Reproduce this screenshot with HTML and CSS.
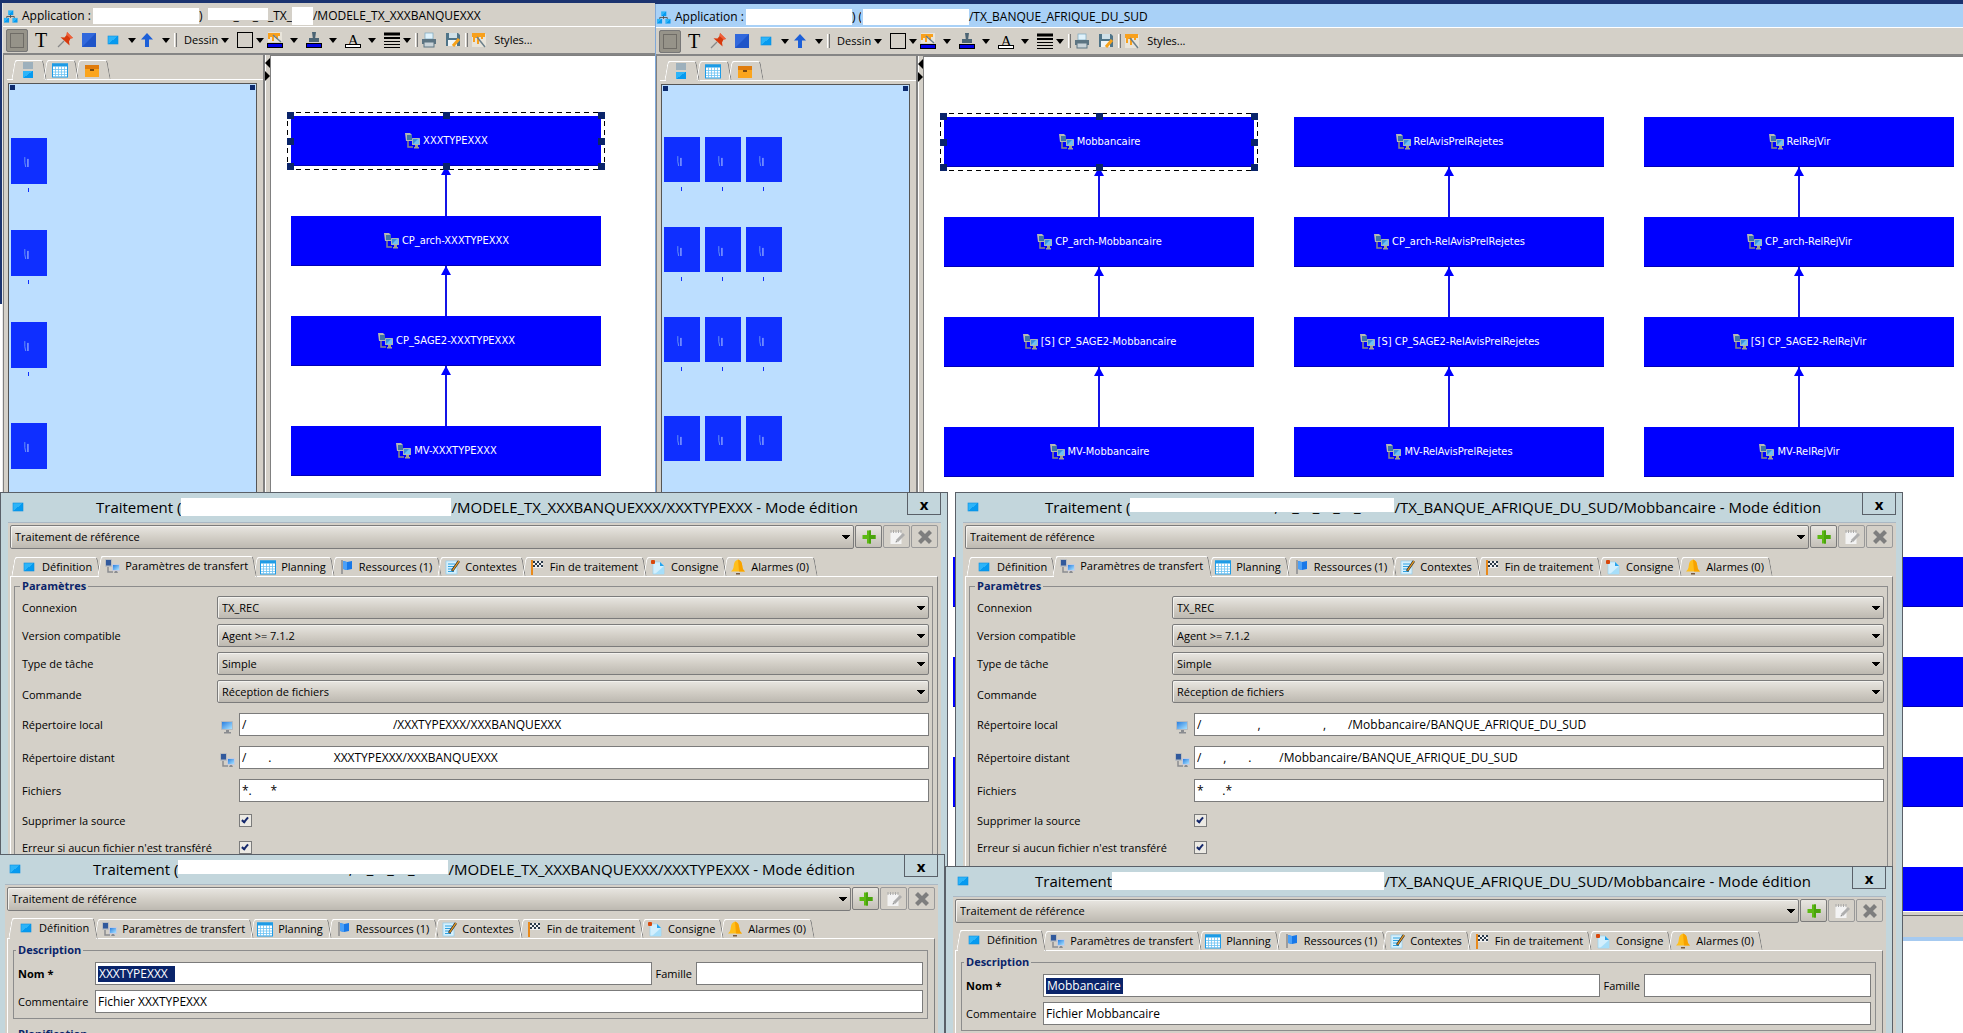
FILE: index.html
```html
<!DOCTYPE html>
<html lang="fr">
<head>
	<meta charset="utf-8">
	<title>Traitement - Mode édition</title>
	<link rel="stylesheet" href="styles.css">
</head>
<body>
	<!-- icons -->
	<svg class="sprite">
		<defs>
			<linearGradient id="g-sq" x1="0" y1="0" x2="1" y2="1">
				<stop offset="0.5" stop-color="#2db4f8"/><stop offset="0.5" stop-color="#069af0"/>
			</linearGradient>
			<linearGradient id="g-scr" x1="0" y1="0" x2="1" y2="1">
				<stop offset="0" stop-color="#2a7fe0"/><stop offset="1" stop-color="#a9e2ff"/>
			</linearGradient>
		</defs>
		<symbol id="i-square" viewBox="0 0 16 16"><rect x="3" y="4" width="10" height="8" fill="url(#g-sq)" stroke="#0a8fe0" stroke-width=".6"/></symbol>
		<symbol id="i-app" viewBox="0 0 16 16">
			<path d="M8 6v4M4 11V8.500h8V11" fill="none" stroke="#555" stroke-width="1"/>
			<rect x="5.500" y="2" width="5.500" height="5" fill="url(#g-sq)"/><rect x="1" y="10" width="5.500" height="5" fill="url(#g-sq)"/><rect x="10" y="10" width="5.500" height="5" fill="url(#g-sq)"/>
		</symbol>
		<symbol id="i-net" viewBox="0 0 16 16">
			<rect x="1" y="1" width="7" height="8" rx="1" fill="#b9bcc0"/><rect x="2" y="2" width="5" height="5.500" fill="#31599c"/>
			<path d="M4 9v5h5" fill="none" stroke="#8a8c90" stroke-width="1.500"/>
			<rect x="8" y="6" width="8" height="7" rx=".6" fill="#c5cade"/><rect x="9" y="7" width="6" height="5" fill="url(#g-scr)"/>
			<path d="M11 13h2l1 2h-4z" fill="#8a8c90"/>
		</symbol>
		<symbol id="i-host" viewBox="0 0 16 16">
			<path d="M1 0h5l2 2v6H2z" fill="#b4b9b2"/><rect x="3" y="2" width="5" height="5" fill="#3f74a8"/>
			<path d="M4 8v6h5" fill="none" stroke="#8c8c84" stroke-width="1.500"/>
			<rect x="8" y="5" width="8" height="7" rx=".6" fill="#a9b8b8"/><rect x="9" y="6" width="6" height="5" fill="#6fc0f4"/><path d="M9 11V6h5z" fill="#3b8fdc"/>
			<path d="M11 12h3v2h1v1.500h-5V14h1z" fill="#a3a28e"/>
		</symbol>
		<symbol id="i-pc" viewBox="0 0 16 16">
			<rect x="2" y="2" width="12" height="9" rx=".8" fill="#b6babf"/><rect x="3" y="3" width="10" height="7" fill="url(#g-scr)"/>
			<path d="M7 11h3v2h2v1.500H5V13h2z" fill="#8a8c90"/>
		</symbol>
		<symbol id="i-cal" viewBox="0 0 16 16">
			<rect x=".5" y="2" width="15" height="13" fill="#fff" stroke="#1d9be6"/><rect x="0" y="1.500" width="16" height="3" fill="#1d9be6"/>
			<path d="M3.500 4v11M6.500 4v11M9.500 4v11M12.500 4v11M1 7.500h14M1 10h14M1 12.500h14" stroke="#6cc3f2" stroke-width=".8"/>
		</symbol>
		<symbol id="i-flag" viewBox="0 0 16 16">
			<rect x="3" y="1" width="2" height="14" fill="#9c9c9c"/><path d="M5 2l4 1 5-1v8l-5 1-4-1z" fill="#1878e8"/><path d="M5 2l4 1v8l-4-1z" fill="#4aa0f8"/>
		</symbol>
		<symbol id="i-note" viewBox="0 0 16 16">
			<rect x="2" y="2" width="11" height="13" fill="#d7f0fc" stroke="#8fcdee" stroke-width=".7"/><path d="M4 5h7M4 7.500h6M4 10h5M4 12.500h6" stroke="#2da2e2"/>
			<path d="M15 2L8 12" stroke="#333" stroke-width="2.600"/><path d="M15 2L8.500 11.500" stroke="#f6a21c" stroke-width="1.200"/>
		</symbol>
		<symbol id="i-end" viewBox="0 0 16 16">
			<rect x="2" y="1" width="2" height="15" fill="#e88a1c"/><rect x="4" y="2" width="10" height="7" fill="#eee"/>
			<path d="M4 2h2v2H4zM8 2h2v2H8zM12 2h2v2h-2zM6 4h2v2H6zM10 4h2v2h-2zM4 6h2v2H4zM8 6h2v2H8zM12 6h2v2h-2z" fill="#2a3a4a"/>
		</symbol>
		<symbol id="i-page" viewBox="0 0 16 16">
			<path d="M3 3h7l4 4v8H3z" fill="#d2effd" stroke="#8fd2f4" stroke-width=".6"/><path d="M14 7v8H5z" fill="#a6def9"/><path d="M10 3l4 4h-4z" fill="#26a3ec"/><rect x="1" y="1" width="4" height="4" rx="1" fill="#d8480c"/>
		</symbol>
		<symbol id="i-bell" viewBox="0 0 16 16">
			<path d="M8 0.500c3 1 4 3 4.300 6.500.2 2.500 1 4 2.700 5.500H1C2.700 11 3.500 9.500 3.700 7 4 3.500 5 1.500 8 .5z" fill="#ffbf1c"/><path d="M8 .5c3 1 4 3 4.300 6.500.2 2.500 1 4 2.700 5.500H9z" fill="#f7a200"/><path d="M6 14h4v1.500H6z" fill="#7a5a3a"/>
		</symbol>
		<symbol id="i-plus" viewBox="0 0 16 16"><path d="M6 1.500h4V6h4.500v4H10v4.500H6V10H1.500V6H6z" fill="#5db914"/><path d="M10 1.500V6h4.500v4H10v4.500H8L8 1.500z" fill="#4aa40c"/></symbol>
		<symbol id="i-edit" viewBox="0 0 16 16">
			<rect x="1.500" y="3" width="11" height="12" fill="#f3f3f3"/><path d="M2 1v3M4.500 1v3M7 1v3M9.500 1v3M12 1v3" stroke="#aaa"/><path d="M15 5l-7 7" stroke="#aeaeae" stroke-width="3"/><path d="M6.500 13.500l.6-2 1.400 1.400z" fill="#888"/>
		</symbol>
		<symbol id="i-del" viewBox="0 0 16 16"><path d="M2.500 2.500l11 11M13.500 2.500l-11 11" stroke="#7e7e7e" stroke-width="4.200"/></symbol>
		<symbol id="i-box" viewBox="0 0 16 16">
			<rect x="1" y="3" width="14" height="12" fill="#fba51c"/><rect x="1" y="3" width="14" height="4" fill="#e07c0c"/><rect x="6" y="7" width="4" height="2" fill="#7a4a10"/>
		</symbol>
		<symbol id="i-two" viewBox="0 0 16 16"><rect x="3" y="0" width="10" height="7" fill="#9db0bc"/><rect x="3" y="9" width="10" height="7" fill="url(#g-sq)"/></symbol>
		<symbol id="i-pin" viewBox="0 0 16 16"><path d="M7 9L1 15" stroke="#888" stroke-width="1.300"/><path d="M10 0l6 6-2.500.6-1.500 2.800.6 4L3.500 5.200l4 .3L9.600 3z" fill="#d8390c"/><path d="M10 0l6 6-2.500.6L9.600 3z" fill="#f0603a"/></symbol>
		<symbol id="i-rect" viewBox="0 0 16 16"><rect x="1" y="1" width="14" height="14" fill="#1f54c8"/><path d="M1 1h14L1 15z" fill="#3168dc"/></symbol>
		<symbol id="i-up" viewBox="0 0 16 16"><path d="M8 1l6 6.500h-4V15H6V7.500H2z" fill="#1c5fd8"/></symbol>
		<symbol id="i-frame" viewBox="0 0 16 16"><rect x=".5" y=".5" width="15" height="15" fill="none" stroke="#000"/></symbol>
		<symbol id="i-paint" viewBox="0 0 16 16">
			<rect x="1" y="0" width="14" height="10" fill="#e8e4da"/><path d="M1 1h12v3h-2v3H9V4H7v5H5V5H3v2H1z" fill="#f8a01c"/><path d="M6 3l8 7" stroke="#6b7f8a" stroke-width="1.500"/><rect x=".5" y="11.500" width="15" height="4" fill="#0000e8" stroke="#000"/>
		</symbol>
		<symbol id="i-stamp" viewBox="0 0 16 16">
			<path d="M6 0h4l-.8 6H13v4H3V6h3.800z" fill="#4b6474"/><rect x=".5" y="11.500" width="15" height="4" fill="#0000e8" stroke="#000"/>
		</symbol>
		<symbol id="i-lines" viewBox="0 0 16 16"><path d="M0 2h16" stroke="#000" stroke-width="3"/><path d="M0 6h16" stroke="#000" stroke-width="2"/><path d="M0 9.500h16M0 12.500h16M0 15.500h16" stroke="#000"/></symbol>
		<symbol id="i-print" viewBox="0 0 16 16">
			<rect x="4" y="1" width="8" height="6" fill="#dff2fb" stroke="#7aa6bd" stroke-width=".7"/><rect x="1" y="7" width="14" height="5" fill="#5c7482"/><rect x="3" y="10" width="10" height="5" fill="#c9d3d8" stroke="#5c7482"/>
		</symbol>
		<symbol id="i-save" viewBox="0 0 16 16">
			<path d="M1 1h12l2 2v11H1z" fill="#4f7488"/><rect x="4" y="1" width="8" height="5" fill="#cfe0e8"/><rect x="3" y="8" width="9" height="6" fill="#eef4f7"/><path d="M14 7l-6 7" stroke="#f6a21c" stroke-width="3"/>
		</symbol>
		<symbol id="i-style" viewBox="0 0 16 16">
			<rect x="1" y="2" width="14" height="13" fill="#e8e4da"/><path d="M1 1h13v4h-2v2h-2V5H8v7H6V6H4v4H2V5H1z" fill="#f8a01c"/><path d="M6 5l8 10" stroke="#6b7f8a" stroke-width="1.500"/>
		</symbol>
		<symbol id="i-mark" viewBox="0 0 10 14"><path d="M2 1v6l1 5" fill="none" stroke="#6f9cf0"/><path d="M5.500 3v9" stroke="#cfe2ff"/></symbol>
	</svg>

	<div class="desktop">
		<!-- model application -->
		<section class="app app-model">
			<header class="app-title">
				<svg class="icon"><use href="#i-app"/></svg>
				<span>Application :</span>
				<span class="mask mask-wide"></span>
				<span class="paren">)</span>
				<span class="mask mask-mid mask-thin"><i>_</i><i>_</i></span>
				<span>_TX_</span>
				<span class="mask mask-short"></span>
				<span>/MODELE_TX_XXXBANQUEXXX</span>
			</header>
			<nav class="toolbar">
				<button class="tool-select" aria-label="Sélection"></button>
				<button class="tool serif">T</button>
				<button class="tool" aria-label="Épingle"><svg><use href="#i-pin"/></svg></button>
				<button class="tool" aria-label="Rectangle"><svg><use href="#i-rect"/></svg></button>
				<button class="tool" aria-label="Traitement"><svg><use href="#i-square"/></svg></button>
				<span class="caret"></span>
				<button class="tool tight" aria-label="Lien"><svg><use href="#i-up"/></svg></button>
				<span class="caret"></span>
				<span class="sep"></span>
				<button class="tool-text">Dessin</button>
				<span class="caret tight"></span>
				<button class="tool" aria-label="Forme"><svg><use href="#i-frame"/></svg></button>
				<span class="caret tight"></span>
				<button class="tool tight" aria-label="Remplissage"><svg><use href="#i-paint"/></svg></button>
				<span class="caret"></span>
				<button class="tool" aria-label="Contour"><svg><use href="#i-stamp"/></svg></button>
				<span class="caret"></span>
				<button class="tool serif bar">A</button>
				<span class="caret"></span>
				<button class="tool" aria-label="Trait"><svg><use href="#i-lines"/></svg></button>
				<span class="caret tight"></span>
				<span class="sep"></span>
				<button class="tool tight" aria-label="Imprimer"><svg><use href="#i-print"/></svg></button>
				<button class="tool" aria-label="Enregistrer"><svg><use href="#i-save"/></svg></button>
				<span class="sep"></span>
				<button class="tool tight" aria-label="Pinceau"><svg><use href="#i-style"/></svg></button>
				<button class="tool-text">Styles...</button>
			</nav>
			<div class="app-main">
				<aside class="sidebar">
					<div class="side-tabs">
						<button class="side-tab on" aria-label="Aperçu"><svg class="icon"><use href="#i-two"/></svg></button>
						<button class="side-tab" aria-label="Planning"><svg class="icon"><use href="#i-cal"/></svg></button>
						<button class="side-tab" aria-label="Ressources"><svg class="icon"><use href="#i-box"/></svg></button>
					</div>
					<div class="map">
						<div class="tiles">
							<i class="tile"><svg><use href="#i-mark"/></svg></i>
							<i class="tile"><svg><use href="#i-mark"/></svg></i>
							<i class="tile"><svg><use href="#i-mark"/></svg></i>
							<i class="tile last"><svg><use href="#i-mark"/></svg></i>
						</div>
					</div>
				</aside>
				<div class="splitter"><i class="to-left"></i><i class="to-right"></i></div>
				<div class="canvas">
					<div class="chains">
						<div class="chain">
							<div class="node selected"><svg class="icon"><use href="#i-host"/></svg>XXXTYPEXXX<b class="handles"></b></div>
							<i class="arrow"></i>
							<div class="node"><svg class="icon"><use href="#i-host"/></svg>CP_arch-XXXTYPEXXX</div>
							<i class="arrow"></i>
							<div class="node"><svg class="icon"><use href="#i-host"/></svg>CP_SAGE2-XXXTYPEXXX</div>
							<i class="arrow long"></i>
							<div class="node"><svg class="icon"><use href="#i-host"/></svg>MV-XXXTYPEXXX</div>
						</div>
					</div>
				</div>
			</div>
		</section>

		<!-- real application -->
		<section class="app app-bank">
			<header class="app-title">
				<svg class="icon"><use href="#i-app"/></svg>
				<span>Application :</span>
				<span class="mask mask-wide"></span>
				<span class="paren">) (</span>
				<span class="mask mask-wide"></span>
				<span>/TX_BANQUE_AFRIQUE_DU_SUD</span>
			</header>
			<nav class="toolbar">
				<button class="tool-select" aria-label="Sélection"></button>
				<button class="tool serif">T</button>
				<button class="tool" aria-label="Épingle"><svg><use href="#i-pin"/></svg></button>
				<button class="tool" aria-label="Rectangle"><svg><use href="#i-rect"/></svg></button>
				<button class="tool" aria-label="Traitement"><svg><use href="#i-square"/></svg></button>
				<span class="caret"></span>
				<button class="tool tight" aria-label="Lien"><svg><use href="#i-up"/></svg></button>
				<span class="caret"></span>
				<span class="sep"></span>
				<button class="tool-text">Dessin</button>
				<span class="caret tight"></span>
				<button class="tool" aria-label="Forme"><svg><use href="#i-frame"/></svg></button>
				<span class="caret tight"></span>
				<button class="tool tight" aria-label="Remplissage"><svg><use href="#i-paint"/></svg></button>
				<span class="caret"></span>
				<button class="tool" aria-label="Contour"><svg><use href="#i-stamp"/></svg></button>
				<span class="caret"></span>
				<button class="tool serif bar">A</button>
				<span class="caret"></span>
				<button class="tool" aria-label="Trait"><svg><use href="#i-lines"/></svg></button>
				<span class="caret tight"></span>
				<span class="sep"></span>
				<button class="tool tight" aria-label="Imprimer"><svg><use href="#i-print"/></svg></button>
				<button class="tool" aria-label="Enregistrer"><svg><use href="#i-save"/></svg></button>
				<span class="sep"></span>
				<button class="tool tight" aria-label="Pinceau"><svg><use href="#i-style"/></svg></button>
				<button class="tool-text">Styles...</button>
			</nav>
			<div class="app-main">
				<aside class="sidebar">
					<div class="side-tabs">
						<button class="side-tab on" aria-label="Aperçu"><svg class="icon"><use href="#i-two"/></svg></button>
						<button class="side-tab" aria-label="Planning"><svg class="icon"><use href="#i-cal"/></svg></button>
						<button class="side-tab" aria-label="Ressources"><svg class="icon"><use href="#i-box"/></svg></button>
					</div>
					<div class="map">
						<div class="tiles">
							<i class="tile"><svg><use href="#i-mark"/></svg></i>
							<i class="tile"><svg><use href="#i-mark"/></svg></i>
							<i class="tile"><svg><use href="#i-mark"/></svg></i>
							<i class="tile last"><svg><use href="#i-mark"/></svg></i>
						</div>
						<div class="tiles">
							<i class="tile"><svg><use href="#i-mark"/></svg></i>
							<i class="tile"><svg><use href="#i-mark"/></svg></i>
							<i class="tile"><svg><use href="#i-mark"/></svg></i>
							<i class="tile last"><svg><use href="#i-mark"/></svg></i>
						</div>
						<div class="tiles">
							<i class="tile"><svg><use href="#i-mark"/></svg></i>
							<i class="tile"><svg><use href="#i-mark"/></svg></i>
							<i class="tile"><svg><use href="#i-mark"/></svg></i>
							<i class="tile last"><svg><use href="#i-mark"/></svg></i>
						</div>
					</div>
				</aside>
				<div class="splitter"><i class="to-left"></i><i class="to-right"></i></div>
				<div class="canvas">
					<div class="chains">
						<div class="chain">
							<div class="node selected"><svg class="icon"><use href="#i-host"/></svg>Mobbancaire<b class="handles"></b></div>
							<i class="arrow"></i>
							<div class="node"><svg class="icon"><use href="#i-host"/></svg>CP_arch-Mobbancaire</div>
							<i class="arrow"></i>
							<div class="node"><svg class="icon"><use href="#i-host"/></svg>[S] CP_SAGE2-Mobbancaire</div>
							<i class="arrow long"></i>
							<div class="node"><svg class="icon"><use href="#i-host"/></svg>MV-Mobbancaire</div>
						</div>
						<div class="chain">
							<div class="node"><svg class="icon"><use href="#i-host"/></svg>RelAvisPrelRejetes</div>
							<i class="arrow"></i>
							<div class="node"><svg class="icon"><use href="#i-host"/></svg>CP_arch-RelAvisPrelRejetes</div>
							<i class="arrow"></i>
							<div class="node"><svg class="icon"><use href="#i-host"/></svg>[S] CP_SAGE2-RelAvisPrelRejetes</div>
							<i class="arrow long"></i>
							<div class="node"><svg class="icon"><use href="#i-host"/></svg>MV-RelAvisPrelRejetes</div>
						</div>
						<div class="chain">
							<div class="node"><svg class="icon"><use href="#i-host"/></svg>RelRejVir</div>
							<i class="arrow"></i>
							<div class="node"><svg class="icon"><use href="#i-host"/></svg>CP_arch-RelRejVir</div>
							<i class="arrow"></i>
							<div class="node"><svg class="icon"><use href="#i-host"/></svg>[S] CP_SAGE2-RelRejVir</div>
							<i class="arrow long"></i>
							<div class="node"><svg class="icon"><use href="#i-host"/></svg>MV-RelRejVir</div>
						</div>
					</div>
					<div class="chains chains-low">
						<div class="chain">
							<div class="node"></div><i class="arrow"></i><div class="node"></div><i class="arrow"></i><div class="node"></div><i class="arrow long"></i><div class="node"></div>
						</div>
						<div class="chain">
							<div class="node"></div><i class="arrow"></i><div class="node"></div><i class="arrow"></i><div class="node"></div><i class="arrow long"></i><div class="node"></div>
						</div>
						<div class="chain">
							<div class="node"></div><i class="arrow"></i><div class="node"></div><i class="arrow"></i><div class="node"></div><i class="arrow long"></i><div class="node"></div>
						</div>
					</div>
				</div>
			</div>
			<footer class="status"></footer>
		</section>

		<!-- transfer settings, model -->
		<section class="dialog dialog-a">
			<header class="titlebar">
				<svg class="icon"><use href="#i-square"/></svg>
				<h2>Traitement (</h2><span class="mask mask-title"></span><h2>/MODELE_TX_XXXBANQUEXXX/XXXTYPEXXX - Mode édition</h2>
				<button class="close">x</button>
			</header>
			<div class="dialog-body">
				<div class="ref-row">
					<select aria-label="Référence"><option>Traitement de référence</option></select>
					<button class="action" aria-label="Ajouter"><svg class="icon"><use href="#i-plus"/></svg></button>
					<button class="action off" aria-label="Modifier"><svg class="icon"><use href="#i-edit"/></svg></button>
					<button class="action off" aria-label="Supprimer"><svg class="icon"><use href="#i-del"/></svg></button>
				</div>
				<div class="tabs">
					<button class="tab first"><svg class="icon"><use href="#i-square"/></svg>Définition</button>
					<button class="tab on"><svg class="icon"><use href="#i-net"/></svg>Paramètres de transfert</button>
					<button class="tab"><svg class="icon"><use href="#i-cal"/></svg>Planning</button>
					<button class="tab"><svg class="icon"><use href="#i-flag"/></svg>Ressources (1)</button>
					<button class="tab"><svg class="icon"><use href="#i-note"/></svg>Contextes</button>
					<button class="tab"><svg class="icon"><use href="#i-end"/></svg>Fin de traitement</button>
					<button class="tab"><svg class="icon"><use href="#i-page"/></svg>Consigne</button>
					<button class="tab"><svg class="icon"><use href="#i-bell"/></svg>Alarmes (0)</button>
				</div>
				<div class="pane">
					<fieldset class="params">
						<legend>Paramètres</legend>
						<div class="row"><label for="a-cnx">Connexion</label><select id="a-cnx"><option>TX_REC</option></select></div>
						<div class="row"><label for="a-ver">Version compatible</label><select id="a-ver"><option>Agent &gt;= 7.1.2</option></select></div>
						<div class="row"><label for="a-typ">Type de tâche</label><select id="a-typ"><option>Simple</option></select></div>
						<div class="row row-cmd"><label for="a-cmd">Commande</label><select id="a-cmd"><option>Réception de fichiers</option></select></div>
						<div class="row row-text"><label for="a-loc">Répertoire local</label><span class="slot"><svg class="icon"><use href="#i-pc"/></svg></span><input type="text" id="a-loc" value="/                                               /XXXTYPEXXX/XXXBANQUEXXX"></div>
						<div class="row row-text"><label for="a-dis">Répertoire distant</label><span class="slot"><svg class="icon"><use href="#i-net"/></svg></span><input type="text" id="a-dis" value="/       .                    XXXTYPEXXX/XXXBANQUEXXX"></div>
						<div class="row row-text"><label for="a-fic">Fichiers</label><span class="slot"></span><input type="text" id="a-fic" value="*.      *"></div>
						<div class="row row-check"><label for="a-sup">Supprimer la source</label><span class="slot"></span><input type="checkbox" id="a-sup" checked></div>
						<div class="row row-check"><label for="a-err">Erreur si aucun fichier n'est transféré</label><span class="slot"></span><input type="checkbox" id="a-err" checked></div>
					</fieldset>
				</div>
			</div>
		</section>

		<!-- transfer settings, bank -->
		<section class="dialog dialog-b">
			<header class="titlebar">
				<svg class="icon"><use href="#i-square"/></svg>
				<h2>Traitement (</h2><span class="mask mask-title mask-thin"><i>,</i><i>_</i><i>_</i><i>_</i><i>_</i></span><h2>/TX_BANQUE_AFRIQUE_DU_SUD/Mobbancaire - Mode édition</h2>
				<button class="close">x</button>
			</header>
			<div class="dialog-body">
				<div class="ref-row">
					<select aria-label="Référence"><option>Traitement de référence</option></select>
					<button class="action" aria-label="Ajouter"><svg class="icon"><use href="#i-plus"/></svg></button>
					<button class="action off" aria-label="Modifier"><svg class="icon"><use href="#i-edit"/></svg></button>
					<button class="action off" aria-label="Supprimer"><svg class="icon"><use href="#i-del"/></svg></button>
				</div>
				<div class="tabs">
					<button class="tab first"><svg class="icon"><use href="#i-square"/></svg>Définition</button>
					<button class="tab on"><svg class="icon"><use href="#i-net"/></svg>Paramètres de transfert</button>
					<button class="tab"><svg class="icon"><use href="#i-cal"/></svg>Planning</button>
					<button class="tab"><svg class="icon"><use href="#i-flag"/></svg>Ressources (1)</button>
					<button class="tab"><svg class="icon"><use href="#i-note"/></svg>Contextes</button>
					<button class="tab"><svg class="icon"><use href="#i-end"/></svg>Fin de traitement</button>
					<button class="tab"><svg class="icon"><use href="#i-page"/></svg>Consigne</button>
					<button class="tab"><svg class="icon"><use href="#i-bell"/></svg>Alarmes (0)</button>
				</div>
				<div class="pane">
					<fieldset class="params">
						<legend>Paramètres</legend>
						<div class="row"><label for="b-cnx">Connexion</label><select id="b-cnx"><option>TX_REC</option></select></div>
						<div class="row"><label for="b-ver">Version compatible</label><select id="b-ver"><option>Agent &gt;= 7.1.2</option></select></div>
						<div class="row"><label for="b-typ">Type de tâche</label><select id="b-typ"><option>Simple</option></select></div>
						<div class="row row-cmd"><label for="b-cmd">Commande</label><select id="b-cmd"><option>Réception de fichiers</option></select></div>
						<div class="row row-text"><label for="b-loc">Répertoire local</label><span class="slot"><svg class="icon"><use href="#i-pc"/></svg></span><input type="text" id="b-loc" value="/                  ,                    ,       /Mobbancaire/BANQUE_AFRIQUE_DU_SUD"></div>
						<div class="row row-text"><label for="b-dis">Répertoire distant</label><span class="slot"><svg class="icon"><use href="#i-net"/></svg></span><input type="text" id="b-dis" value="/       ,       .         /Mobbancaire/BANQUE_AFRIQUE_DU_SUD"></div>
						<div class="row row-text"><label for="b-fic">Fichiers</label><span class="slot"></span><input type="text" id="b-fic" value="*      .*"></div>
						<div class="row row-check"><label for="b-sup">Supprimer la source</label><span class="slot"></span><input type="checkbox" id="b-sup" checked></div>
						<div class="row row-check"><label for="b-err">Erreur si aucun fichier n'est transféré</label><span class="slot"></span><input type="checkbox" id="b-err" checked></div>
					</fieldset>
				</div>
			</div>
		</section>

		<!-- definition, model -->
		<section class="dialog dialog-c">
			<header class="titlebar">
				<svg class="icon"><use href="#i-square"/></svg>
				<h2>Traitement (</h2><span class="mask mask-title mask-thin"><i>,</i><i>_</i><i>_</i><i>_</i></span><h2>/MODELE_TX_XXXBANQUEXXX/XXXTYPEXXX - Mode édition</h2>
				<button class="close">x</button>
			</header>
			<div class="dialog-body">
				<div class="ref-row">
					<select aria-label="Référence"><option>Traitement de référence</option></select>
					<button class="action" aria-label="Ajouter"><svg class="icon"><use href="#i-plus"/></svg></button>
					<button class="action off" aria-label="Modifier"><svg class="icon"><use href="#i-edit"/></svg></button>
					<button class="action off" aria-label="Supprimer"><svg class="icon"><use href="#i-del"/></svg></button>
				</div>
				<div class="tabs">
					<button class="tab first on"><svg class="icon"><use href="#i-square"/></svg>Définition</button>
					<button class="tab"><svg class="icon"><use href="#i-net"/></svg>Paramètres de transfert</button>
					<button class="tab"><svg class="icon"><use href="#i-cal"/></svg>Planning</button>
					<button class="tab"><svg class="icon"><use href="#i-flag"/></svg>Ressources (1)</button>
					<button class="tab"><svg class="icon"><use href="#i-note"/></svg>Contextes</button>
					<button class="tab"><svg class="icon"><use href="#i-end"/></svg>Fin de traitement</button>
					<button class="tab"><svg class="icon"><use href="#i-page"/></svg>Consigne</button>
					<button class="tab"><svg class="icon"><use href="#i-bell"/></svg>Alarmes (0)</button>
				</div>
				<div class="pane">
					<fieldset class="desc">
						<legend>Description</legend>
						<div class="row">
							<label for="c-nom" class="must">Nom *</label>
							<div class="field"><input type="text" id="c-nom" class="picked" value="XXXTYPEXXX"></div>
							<label for="c-fam" class="family">Famille</label>
							<input type="text" id="c-fam" class="short">
						</div>
						<div class="row"><label for="c-com">Commentaire</label><input type="text" id="c-com" value="Fichier XXXTYPEXXX"></div>
					</fieldset>
					<fieldset class="desc">
						<legend>Planification</legend>
					</fieldset>
				</div>
			</div>
		</section>

		<!-- definition, bank -->
		<section class="dialog dialog-d">
			<header class="titlebar">
				<svg class="icon"><use href="#i-square"/></svg>
				<h2>Traitement</h2><span class="mask mask-title"></span><h2>/TX_BANQUE_AFRIQUE_DU_SUD/Mobbancaire - Mode édition</h2>
				<button class="close">x</button>
			</header>
			<div class="dialog-body">
				<div class="ref-row">
					<select aria-label="Référence"><option>Traitement de référence</option></select>
					<button class="action" aria-label="Ajouter"><svg class="icon"><use href="#i-plus"/></svg></button>
					<button class="action off" aria-label="Modifier"><svg class="icon"><use href="#i-edit"/></svg></button>
					<button class="action off" aria-label="Supprimer"><svg class="icon"><use href="#i-del"/></svg></button>
				</div>
				<div class="tabs">
					<button class="tab first on"><svg class="icon"><use href="#i-square"/></svg>Définition</button>
					<button class="tab"><svg class="icon"><use href="#i-net"/></svg>Paramètres de transfert</button>
					<button class="tab"><svg class="icon"><use href="#i-cal"/></svg>Planning</button>
					<button class="tab"><svg class="icon"><use href="#i-flag"/></svg>Ressources (1)</button>
					<button class="tab"><svg class="icon"><use href="#i-note"/></svg>Contextes</button>
					<button class="tab"><svg class="icon"><use href="#i-end"/></svg>Fin de traitement</button>
					<button class="tab"><svg class="icon"><use href="#i-page"/></svg>Consigne</button>
					<button class="tab"><svg class="icon"><use href="#i-bell"/></svg>Alarmes (0)</button>
				</div>
				<div class="pane">
					<fieldset class="desc">
						<legend>Description</legend>
						<div class="row">
							<label for="d-nom" class="must">Nom *</label>
							<div class="field"><input type="text" id="d-nom" class="picked" value="Mobbancaire"></div>
							<label for="d-fam" class="family">Famille</label>
							<input type="text" id="d-fam" class="short">
						</div>
						<div class="row"><label for="d-com">Commentaire</label><input type="text" id="d-com" value="Fichier Mobbancaire"></div>
					</fieldset>
				</div>
			</div>
		</section>
	</div>
</body>
</html>
```
FILE: styles.css
```css
*{
	box-sizing: border-box;
}

body{
	margin: 0;
	background: #fff;
	color: #000;
	font: 11px/16px "Open Sans", "Noto Sans", sans-serif;
}

button, select, input{
	margin: 0;
	font: inherit;
	color: inherit;
}

button{
	padding: 0;
	border: 0;
	background: none;
}

.sprite{
	position: absolute;
	width: 0;
	height: 0;
}

.icon{
	display: block;
	flex: none;
	width: 16px;
	height: 16px;
}

.desktop{
	position: relative;
	height: 100vh;
	overflow: hidden;
	background: linear-gradient(#1b336f, #1b336f) 0 0 / 100% 4px no-repeat, linear-gradient(#1b336f, #1b336f) 0 0 / 2px 304px no-repeat;
}

/* application windows */
.app{
	position: absolute;
	display: flex;
	flex-direction: column;
	background: #d4d0c8;
	border-left: 1px solid #e8e8e8;
}

.app-model{
	left: 2px;
	top: 3px;
	width: 653px;
	height: 800px;
}

.app-bank{
	left: 655px;
	right: 0;
	top: 4px;
	height: 937px;
	border-left-color: #7fa8d8;
	border-bottom: 4px solid #a6caf0;
}

.app-title{
	display: flex;
	align-items: center;
	flex: none;
	height: 24px;
	padding-top: 2px;
	font-size: 12px;
	white-space: nowrap;
	border-bottom: 1px solid #fff;
}

.app-bank .app-title{
	background: #a9d1f7;
}

.app-title .icon{
	width: 15px;
	margin-right: 4px;
}

.mask{
	flex: none;
	background: #fff;
}

.mask-wide{
	width: 106px;
	height: 16px;
	margin-left: 2px;
}

.paren{
	width: 9px;
	overflow: hidden;
}

.toolbar{
	display: flex;
	align-items: center;
	flex: none;
	height: 28px;
	padding-left: 3px;
	border-bottom: 2px solid #858585;
}

.tool-select{
	width: 22px;
	height: 23px;
	margin-right: -3px;
	border: 1px solid #777;
	border-radius: 2px;
	background: #969389;
	box-shadow: inset 0 0 0 3px #969389, inset 0 0 0 4px #6f6c66;
}

.tool{
	width: 16px;
	height: 16px;
	margin-left: 8px;
	line-height: 16px;
}

.tool svg{
	display: block;
	width: 16px;
	height: 16px;
}

.serif{
	font-family: "Liberation Serif", serif;
	font-size: 20px;
}

.bar{
	font-size: 15px;
	line-height: 12px;
	background: linear-gradient(#fff, #fff) 1px 13px / 14px 2px no-repeat, linear-gradient(#000, #000) 0 12px / 16px 4px no-repeat;
}

.caret{
	margin-left: 7px;
	border: 4px solid transparent;
	border-top: 5px solid #000;
	border-bottom: 0;
}

.sep{
	width: 3px;
	height: 14px;
	margin-left: 4px;
	border-left: 1px solid #fff;
	border-right: 1px solid #777;
}

.tool-text{
	margin-left: 7px;
}

.tool.tight, .caret.tight{
	margin-left: 3px;
}

.app-main{
	display: flex;
	flex: 1;
	min-height: 0;
}

.sidebar{
	display: flex;
	flex-direction: column;
	width: 260px;
	padding-top: 5px;
	border-left: 1px solid #808080;
}

.side-tabs{
	display: flex;
	height: 20px;
	padding-left: 6px;
	margin-left: 3px;
	border-bottom: 1px solid #fff;
}

.side-tab{
	position: relative;
	width: 32px;
	padding-left: 7px;
}

.side-tab.on{
	height: 20px;
	background: #d4d0c8;
}

.side-tab::before, .side-tab::after,
.tab::before, .tab::after{
	content: "";
	position: absolute;
	top: 0;
	bottom: 0;
	border-top: 1px solid #fff;
}

.side-tab::before, .tab::before{
	left: 0;
	width: 8px;
	border-left: 1px solid #fff;
	border-top-left-radius: 3px;
	transform: skewX(-10deg);
}

.side-tab::after, .tab::after{
	left: 4px;
	right: 0;
	border-right: 1px solid #808080;
	border-top-right-radius: 3px;
	transform: skewX(10deg);
}

.map{
	display: flex;
	gap: 5px;
	flex: 1;
	margin: 3px 6px 0 4px;
	padding: 54px 0 0 2px;
	border: 1px solid #555;
	background: linear-gradient(#0c2a6e, #0c2a6e) 1px 1px / 5px 5px no-repeat, linear-gradient(#0c2a6e, #0c2a6e) right 1px top 1px / 5px 5px no-repeat, #bcdeff;
}

.tiles{
	display: flex;
	flex-direction: column;
	gap: 46px;
}

.tile{
	position: relative;
	width: 36px;
	height: 46px;
	padding: 18px 12px;
	background: #0f2fff;
}

.tile svg{
	display: block;
	width: 9px;
	height: 13px;
}

.tile::after{
	content: "";
	position: absolute;
	left: 17px;
	top: 50px;
	width: 1px;
	height: 4px;
	background: #0f2fff;
}

.tile.last{
	margin-top: 9px;
}

.tile.last::after{
	display: none;
}

.app-bank .map{
	padding-top: 52px;
}

.app-bank .tiles{
	gap: 45px;
}

.app-bank .tile{
	height: 45px;
}

.splitter{
	display: flex;
	flex-direction: column;
	gap: 3px;
	width: 7px;
	padding-top: 3px;
	border-left: 2px solid #808080;
	box-shadow: inset 1px 0 #fff;
}

.to-left, .to-right{
	border: 5px solid transparent;
}

.to-left{
	border-left: 0;
	border-right-color: #000;
}

.to-right{
	border-right: 0;
	border-left-color: #000;
}

.canvas{
	flex: 1;
	overflow: hidden;
	padding: 60px 0 0 20px;
	background: #fff;
	border-left: 1px solid #808080;
	border-top: 1px solid #808080;
}

.chains{
	display: flex;
	gap: 40px;
}

.chains-low{
	margin-top: 80px;
	padding-left: 9px;
}

.chain{
	flex: none;
	width: 310px;
}

.node{
	position: relative;
	display: flex;
	align-items: center;
	justify-content: center;
	gap: 3px;
	height: 50px;
	padding-top: 1px;
	color: #fff;
	font: 11px/16px "DejaVu Sans Condensed", sans-serif;
	background: #00f;
	border-bottom: 1px solid #0000b4;
}

/* dashed frame */
.node.selected::before{
	content: "";
	position: absolute;
	inset: -4px -4px -5px;
	--dash: #000 0 5px, transparent 5px 9px;
	background: repeating-linear-gradient(90deg, var(--dash)) 0 0 / 100% 1px, repeating-linear-gradient(90deg, var(--dash)) 0 100% / 100% 1px, repeating-linear-gradient(var(--dash)) 0 0 / 1px 100%, repeating-linear-gradient(var(--dash)) 100% 0 / 1px 100%;
	background-repeat: no-repeat;
}

/* eight grips round the selected node */
.handles{
	position: absolute;
	inset: -4px -4px -5px;
	--grip: linear-gradient(#0a246a, #0a246a);
	background: var(--grip) 0 0, var(--grip) 50% 0, var(--grip) 100% 0, var(--grip) 0 50%, var(--grip) 100% 50%, var(--grip) 0 100%, var(--grip) 50% 100%, var(--grip) 100% 100%;
	background-size: 7px 7px;
	background-repeat: no-repeat;
}

.arrow{
	display: block;
	height: 50px;
	background: linear-gradient(#1414e6, #1414e6) center / 2px 100% no-repeat;
}

.arrow::before{
	content: "";
	display: block;
	width: 0;
	margin: 0 auto;
	border: 5px solid transparent;
	border-top: 0;
	border-bottom: 9px solid #00f;
}

.arrow.long{
	height: 60px;
}

.status{
	flex: none;
	height: 26px;
	border-top: 1px solid #fff;
	box-shadow: 0 -1px #808080, inset 0 3px #d4d0c8, inset 0 4px #666;
}

/* dialogs */
.dialog{
	position: absolute;
	display: flex;
	flex-direction: column;
	width: 948px;
	height: 600px;
	padding: 0 6px 7px 7px;
	background: #c3d6dc;
	border: 1px solid #5a6068;
}

.dialog-a{
	left: 0;
	top: 492px;
}

.dialog-b{
	left: 955px;
	top: 492px;
}

.dialog-c{
	left: -3px;
	top: 854px;
}

.dialog-d{
	left: 945px;
	top: 866px;
}

.titlebar{
	display: flex;
	align-items: center;
	flex: none;
	height: 30px;
	padding: 0 0 2px 2px;
	border-bottom: 1px solid #aab8c4;
}

.titlebar h2{
	margin: 0;
	font-size: 15px;
	font-weight: normal;
	line-height: 20px;
	white-space: nowrap;
}

.titlebar .icon{
	margin-right: 70px;
}

.dialog-b .titlebar .icon, .dialog-d .titlebar .icon{
	margin-right: 64px;
}

.mask-title{
	width: 270px;
	height: 18px;
}

.dialog-b .mask-title{
	width: 264px;
}

.dialog-d .mask-title{
	width: 272px;
}

.mask-thin{
	position: relative;
	display: flex;
	justify-content: flex-end;
	gap: 14px;
	padding-right: 34px;
	font-size: 15px;
	line-height: 16px;
	background: none;
}

.mask-thin::after{
	content: "";
	position: absolute;
	inset: 0 0 4px;
	background: #fff;
}

.mask-thin i{
	font-style: normal;
}

.mask-mid{
	width: 60px;
	height: 16px;
	padding-right: 10px;
	font-size: 12px;
}

.mask-short{
	width: 21px;
	height: 18px;
}

.close{
	align-self: flex-start;
	width: 34px;
	height: 22px;
	margin-left: auto;
	font-size: 15px;
	font-weight: bold;
	line-height: 18px;
	border: 1px solid #5a6068;
	border-top: 0;
}

.dialog-body{
	display: flex;
	flex-direction: column;
	flex: 1;
	padding: 2px 3px 0 2px;
	background: #d4d0c8;
}

.ref-row{
	display: flex;
	gap: 1px;
}

select{
	flex: 1;
	min-width: 0;
	height: 23px;
	padding: 0 4px;
	appearance: none;
	border: 1px solid #7b7b7b;
	border-radius: 2px;
	background-image: conic-gradient(from -45deg at 50% 100%, #000 90deg, transparent 0), linear-gradient(#e8e6e1, #d3cfc7 50%, #bdb9b1);
	background-size: 8px 4px, 100% 100%;
	background-position: right 3px center, 0 0;
	background-repeat: no-repeat;
	box-shadow: inset 1px 1px #f3f2ee;
}

/* the drop-down mark points down */
select{
	background-image: conic-gradient(from 135deg at 50% 0, transparent 0), linear-gradient(#000, #000), linear-gradient(#000, #000), linear-gradient(#000, #000), linear-gradient(#000, #000), linear-gradient(#e8e6e1, #d3cfc7 50%, #bdb9b1);
	background-image: linear-gradient(#000, #000), linear-gradient(#000, #000), linear-gradient(#000, #000), linear-gradient(#000, #000), linear-gradient(#e8e6e1, #d3cfc7 50%, #bdb9b1);
	background-size: 8px 1px, 6px 1px, 4px 1px, 2px 1px, 100% 100%;
	background-position: right 3px top 9px, right 4px top 10px, right 5px top 11px, right 6px top 12px, 0 0;
}

.ref-row select{
	height: 24px;
}

.action{
	display: flex;
	align-items: center;
	justify-content: center;
	width: 27px;
	height: 23px;
	border: 1px solid #7b7b7b;
	border-radius: 2px;
	background: linear-gradient(#e8e6e1, #c4c0b8);
}

.action.off{
	border-color: #999;
	background: #d4d0c8;
}

.tabs{
	display: flex;
	align-items: flex-end;
	height: 27px;
	padding-left: 3px;
}

.tab{
	position: relative;
	display: flex;
	align-items: center;
	gap: 5px;
	height: 19px;
	padding: 0 7px 0 5px;
	white-space: nowrap;
}

.tab .icon{
	position: relative;
}

.tab.first{
	padding-left: 8px;
}

.tab.on{
	z-index: 1;
	height: 21px;
	margin-bottom: -1px;
	padding-bottom: 2px;
	background: #d4d0c8;
}

.pane{
	flex: 1;
	border: 1px solid #fff;
	border-right-color: #808080;
}

fieldset{
	min-width: 0;
	margin: 0;
	border: 1px solid #8c8c8c;
}

legend{
	margin-left: -2px;
	padding: 0 2px;
	color: #0a246a;
	font-weight: bold;
	line-height: 14px;
}

.params{
	height: 400px;
	margin: 2px 4px 0 3px;
	padding: 3px 3px 0 7px;
}

.desc{
	margin: 4px 6px 8px 5px;
	padding: 5px 4px 0;
}

.row{
	display: flex;
	align-items: center;
	height: 23px;
	margin-bottom: 5px;
}

.row label{
	flex: none;
}

.params label{
	width: 195px;
}

.desc label{
	width: 77px;
}

.desc .family{
	width: auto;
	padding: 0 4px;
}

.desc .must{
	font-weight: bold;
}

.row-cmd{
	height: 30px;
	margin-bottom: 3px;
}

.row-cmd select{
	align-self: flex-start;
}

.row-text, .row-check{
	margin-bottom: 10px;
}

.row-check{
	height: 17px;
}

.slot{
	flex: none;
	width: 22px;
	padding: 4px 0 0 2px;
}

input[type="text"], .field{
	flex: 1;
	min-width: 0;
	height: 23px;
	padding: 0 2px;
	font-size: 12px;
	background: #fff;
	border: 1px solid #7b7b7b;
}

.field{
	display: flex;
	align-items: center;
}

.field input.picked{
	flex: none;
	width: 77px;
	height: 16px;
	padding: 0 1px;
	color: #fff;
	background: #0a246a;
	border: 0;
}

.row input.short{
	flex: none;
	width: 227px;
}

input[type="checkbox"]{
	width: 13px;
	height: 13px;
	appearance: none;
	background: #eceae4;
	border: 1px solid #7b7b7b;
}

input[type="checkbox"]:checked::before{
	content: "";
	display: block;
	width: 2px;
	height: 5px;
	margin: 1px 0 0 3px;
	border: solid #14276b;
	border-width: 0 2px 2px 0;
	transform: rotate(40deg);
}
```
